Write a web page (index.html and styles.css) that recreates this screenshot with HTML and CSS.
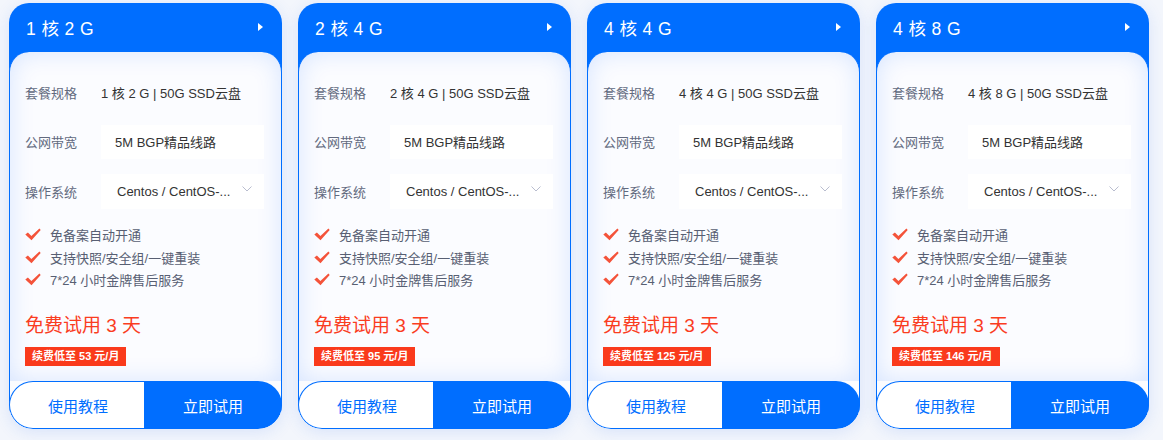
FILE: index.html
```html
<!DOCTYPE html>
<html lang="zh-CN">
<head>
<meta charset="utf-8">
<title>套餐</title>
<link rel="stylesheet" href="styles.css">
</head>
<body>
<div class="cards">
  <div class="card">
    <div class="head"><span class="title">1 核 2 G</span><span class="tri"></span></div>
    <div class="body">
      <div class="row"><span class="label">套餐规格</span><span class="plain">1 核 2 G | 50G SSD云盘</span></div>
      <div class="row"><span class="label">公网带宽</span><span class="box">5M BGP精品线路</span></div>
      <div class="row"><span class="label">操作系统</span><span class="box sel"><span class="opt">Centos / CentOS-...</span><svg class="chev" viewBox="0 0 10 6" width="10" height="6"><path d="M0.5 0.5 L5 5 L9.5 0.5" fill="none" stroke="#b9bdcf" stroke-width="1"/></svg></span></div>
      <ul class="feats">
        <li><svg class="ck" viewBox="0 0 16 13" width="16" height="13"><path d="M0.3 6.6 L2.9 4.6 L6.4 8 L14.4 0.4 L15.7 1.9 L6.5 12.3 Z" fill="#f4533a"/></svg>免备案自动开通</li>
        <li><svg class="ck" viewBox="0 0 16 13" width="16" height="13"><path d="M0.3 6.6 L2.9 4.6 L6.4 8 L14.4 0.4 L15.7 1.9 L6.5 12.3 Z" fill="#f4533a"/></svg>支持快照/安全组/一键重装</li>
        <li><svg class="ck" viewBox="0 0 16 13" width="16" height="13"><path d="M0.3 6.6 L2.9 4.6 L6.4 8 L14.4 0.4 L15.7 1.9 L6.5 12.3 Z" fill="#f4533a"/></svg>7*24 小时金牌售后服务</li>
      </ul>
      <div class="price">免费试用 3 天</div>
      <div class="badge">续费低至 53 元/月</div>
    </div>
    <div class="foot"><a class="btn-guide">使用教程</a><a class="btn-try">立即试用</a></div>
  </div>

  <div class="card">
    <div class="head"><span class="title">2 核 4 G</span><span class="tri"></span></div>
    <div class="body">
      <div class="row"><span class="label">套餐规格</span><span class="plain">2 核 4 G | 50G SSD云盘</span></div>
      <div class="row"><span class="label">公网带宽</span><span class="box">5M BGP精品线路</span></div>
      <div class="row"><span class="label">操作系统</span><span class="box sel"><span class="opt">Centos / CentOS-...</span><svg class="chev" viewBox="0 0 10 6" width="10" height="6"><path d="M0.5 0.5 L5 5 L9.5 0.5" fill="none" stroke="#b9bdcf" stroke-width="1"/></svg></span></div>
      <ul class="feats">
        <li><svg class="ck" viewBox="0 0 16 13" width="16" height="13"><path d="M0.3 6.6 L2.9 4.6 L6.4 8 L14.4 0.4 L15.7 1.9 L6.5 12.3 Z" fill="#f4533a"/></svg>免备案自动开通</li>
        <li><svg class="ck" viewBox="0 0 16 13" width="16" height="13"><path d="M0.3 6.6 L2.9 4.6 L6.4 8 L14.4 0.4 L15.7 1.9 L6.5 12.3 Z" fill="#f4533a"/></svg>支持快照/安全组/一键重装</li>
        <li><svg class="ck" viewBox="0 0 16 13" width="16" height="13"><path d="M0.3 6.6 L2.9 4.6 L6.4 8 L14.4 0.4 L15.7 1.9 L6.5 12.3 Z" fill="#f4533a"/></svg>7*24 小时金牌售后服务</li>
      </ul>
      <div class="price">免费试用 3 天</div>
      <div class="badge">续费低至 95 元/月</div>
    </div>
    <div class="foot"><a class="btn-guide">使用教程</a><a class="btn-try">立即试用</a></div>
  </div>

  <div class="card">
    <div class="head"><span class="title">4 核 4 G</span><span class="tri"></span></div>
    <div class="body">
      <div class="row"><span class="label">套餐规格</span><span class="plain">4 核 4 G | 50G SSD云盘</span></div>
      <div class="row"><span class="label">公网带宽</span><span class="box">5M BGP精品线路</span></div>
      <div class="row"><span class="label">操作系统</span><span class="box sel"><span class="opt">Centos / CentOS-...</span><svg class="chev" viewBox="0 0 10 6" width="10" height="6"><path d="M0.5 0.5 L5 5 L9.5 0.5" fill="none" stroke="#b9bdcf" stroke-width="1"/></svg></span></div>
      <ul class="feats">
        <li><svg class="ck" viewBox="0 0 16 13" width="16" height="13"><path d="M0.3 6.6 L2.9 4.6 L6.4 8 L14.4 0.4 L15.7 1.9 L6.5 12.3 Z" fill="#f4533a"/></svg>免备案自动开通</li>
        <li><svg class="ck" viewBox="0 0 16 13" width="16" height="13"><path d="M0.3 6.6 L2.9 4.6 L6.4 8 L14.4 0.4 L15.7 1.9 L6.5 12.3 Z" fill="#f4533a"/></svg>支持快照/安全组/一键重装</li>
        <li><svg class="ck" viewBox="0 0 16 13" width="16" height="13"><path d="M0.3 6.6 L2.9 4.6 L6.4 8 L14.4 0.4 L15.7 1.9 L6.5 12.3 Z" fill="#f4533a"/></svg>7*24 小时金牌售后服务</li>
      </ul>
      <div class="price">免费试用 3 天</div>
      <div class="badge">续费低至 125 元/月</div>
    </div>
    <div class="foot"><a class="btn-guide">使用教程</a><a class="btn-try">立即试用</a></div>
  </div>

  <div class="card">
    <div class="head"><span class="title">4 核 8 G</span><span class="tri"></span></div>
    <div class="body">
      <div class="row"><span class="label">套餐规格</span><span class="plain">4 核 8 G | 50G SSD云盘</span></div>
      <div class="row"><span class="label">公网带宽</span><span class="box">5M BGP精品线路</span></div>
      <div class="row"><span class="label">操作系统</span><span class="box sel"><span class="opt">Centos / CentOS-...</span><svg class="chev" viewBox="0 0 10 6" width="10" height="6"><path d="M0.5 0.5 L5 5 L9.5 0.5" fill="none" stroke="#b9bdcf" stroke-width="1"/></svg></span></div>
      <ul class="feats">
        <li><svg class="ck" viewBox="0 0 16 13" width="16" height="13"><path d="M0.3 6.6 L2.9 4.6 L6.4 8 L14.4 0.4 L15.7 1.9 L6.5 12.3 Z" fill="#f4533a"/></svg>免备案自动开通</li>
        <li><svg class="ck" viewBox="0 0 16 13" width="16" height="13"><path d="M0.3 6.6 L2.9 4.6 L6.4 8 L14.4 0.4 L15.7 1.9 L6.5 12.3 Z" fill="#f4533a"/></svg>支持快照/安全组/一键重装</li>
        <li><svg class="ck" viewBox="0 0 16 13" width="16" height="13"><path d="M0.3 6.6 L2.9 4.6 L6.4 8 L14.4 0.4 L15.7 1.9 L6.5 12.3 Z" fill="#f4533a"/></svg>7*24 小时金牌售后服务</li>
      </ul>
      <div class="price">免费试用 3 天</div>
      <div class="badge">续费低至 146 元/月</div>
    </div>
    <div class="foot"><a class="btn-guide">使用教程</a><a class="btn-try">立即试用</a></div>
  </div>
</div>
</body>
</html>
```

FILE: styles.css
```css
html, body {
  margin: 0;
  padding: 0;
}
body {
  background: #f3f6fc;
  font-family: "Liberation Sans", "Noto Sans CJK SC", sans-serif;
  width: 1163px;
  height: 440px;
  overflow: hidden;
}
.cards {
  display: flex;
  gap: 16px;
  padding: 3px 9px 0 9px;
}
.card {
  width: 273px;
  height: 426px;
  flex: 0 0 273px;
  display: flex;
  flex-direction: column;
  border-radius: 20px 20px 24px 24px;
  overflow: hidden;
  background: linear-gradient(#006eff 0, #006eff 70px, transparent 70px);
  box-shadow: 0 3px 16px rgba(40, 100, 230, 0.13);
}
.head {
  height: 49px;
  flex: 0 0 49px;
  box-sizing: border-box;
  padding: 0 19px 0 17px;
  display: flex;
  align-items: center;
  justify-content: space-between;
  color: #fff;
  font-size: 17.5px;
}
.title {
  letter-spacing: 0.4px;
}
.tri {
  width: 0;
  height: 0;
  border-top: 4px solid transparent;
  border-bottom: 4px solid transparent;
  border-left: 5px solid #fff;
  margin-top: -2px;
}
.body {
  flex: 1;
  display: flex;
  flex-direction: column;
  align-items: flex-start;
  background: #fbfcff;
  border-left: 1px solid #006eff;
  border-right: 1px solid #006eff;
  border-radius: 20px 20px 0 0;
  box-shadow: inset 0 0 24px rgba(0, 96, 255, 0.15);
  padding: 23px 15px 0 15px;
}
.row {
  display: flex;
  align-items: center;
  height: 34px;
  font-size: 13px;
}
.row + .row {
  margin-top: 15.5px;
}
.label {
  width: 76px;
  color: #626a7e;
}
.plain {
  color: #333;
}
.box {
  width: 163px;
  height: 34px;
  box-sizing: border-box;
  background: #fff;
  color: #333;
  padding: 0 12px 0 14px;
  display: flex;
  align-items: center;
}
.sel {
  height: 35px;
  justify-content: space-between;
  padding-left: 16px;
}
.opt {
  white-space: nowrap;
}
.chev {
  display: block;
  margin-top: -4px;
}
.feats {
  list-style: none;
  margin: 15px 0 0 0;
  padding: 0;
  font-size: 13px;
  color: #585f73;
}
.feats li {
  height: 22.8px;
  display: flex;
  align-items: center;
}
.ck {
  display: block;
  margin-right: 9px;
}
.price {
  margin-top: 22px;
  font-size: 19px;
  line-height: 26px;
  color: #fa3d1f;
}
.badge {
  margin-top: 8px;
  height: 19px;
  line-height: 19px;
  padding: 0 7px;
  background: #fa3a1c;
  color: #fff;
  font-size: 11px;
  font-weight: bold;
}
.foot {
  height: 48px;
  flex: 0 0 48px;
  display: flex;
  background: #fbfcff;
  border-left: 1px solid #006eff;
  border-right: 1px solid #006eff;
}
.btn-guide {
  flex: 0 0 135px;
  margin-left: -1px;
  box-sizing: border-box;
  border: 1px solid #006eff;
  border-right: 0;
  border-radius: 24px 0 0 24px;
  background: #fff;
  color: #006eff;
  font-size: 15px;
  display: flex;
  align-items: center;
  justify-content: center;
  padding-left: 2px;
}
.btn-try {
  flex: 1;
  margin-right: -1px;
  border-radius: 0 24px 24px 0;
  background: #006eff;
  color: #fff;
  font-size: 15px;
  display: flex;
  align-items: center;
  justify-content: center;
}
```
